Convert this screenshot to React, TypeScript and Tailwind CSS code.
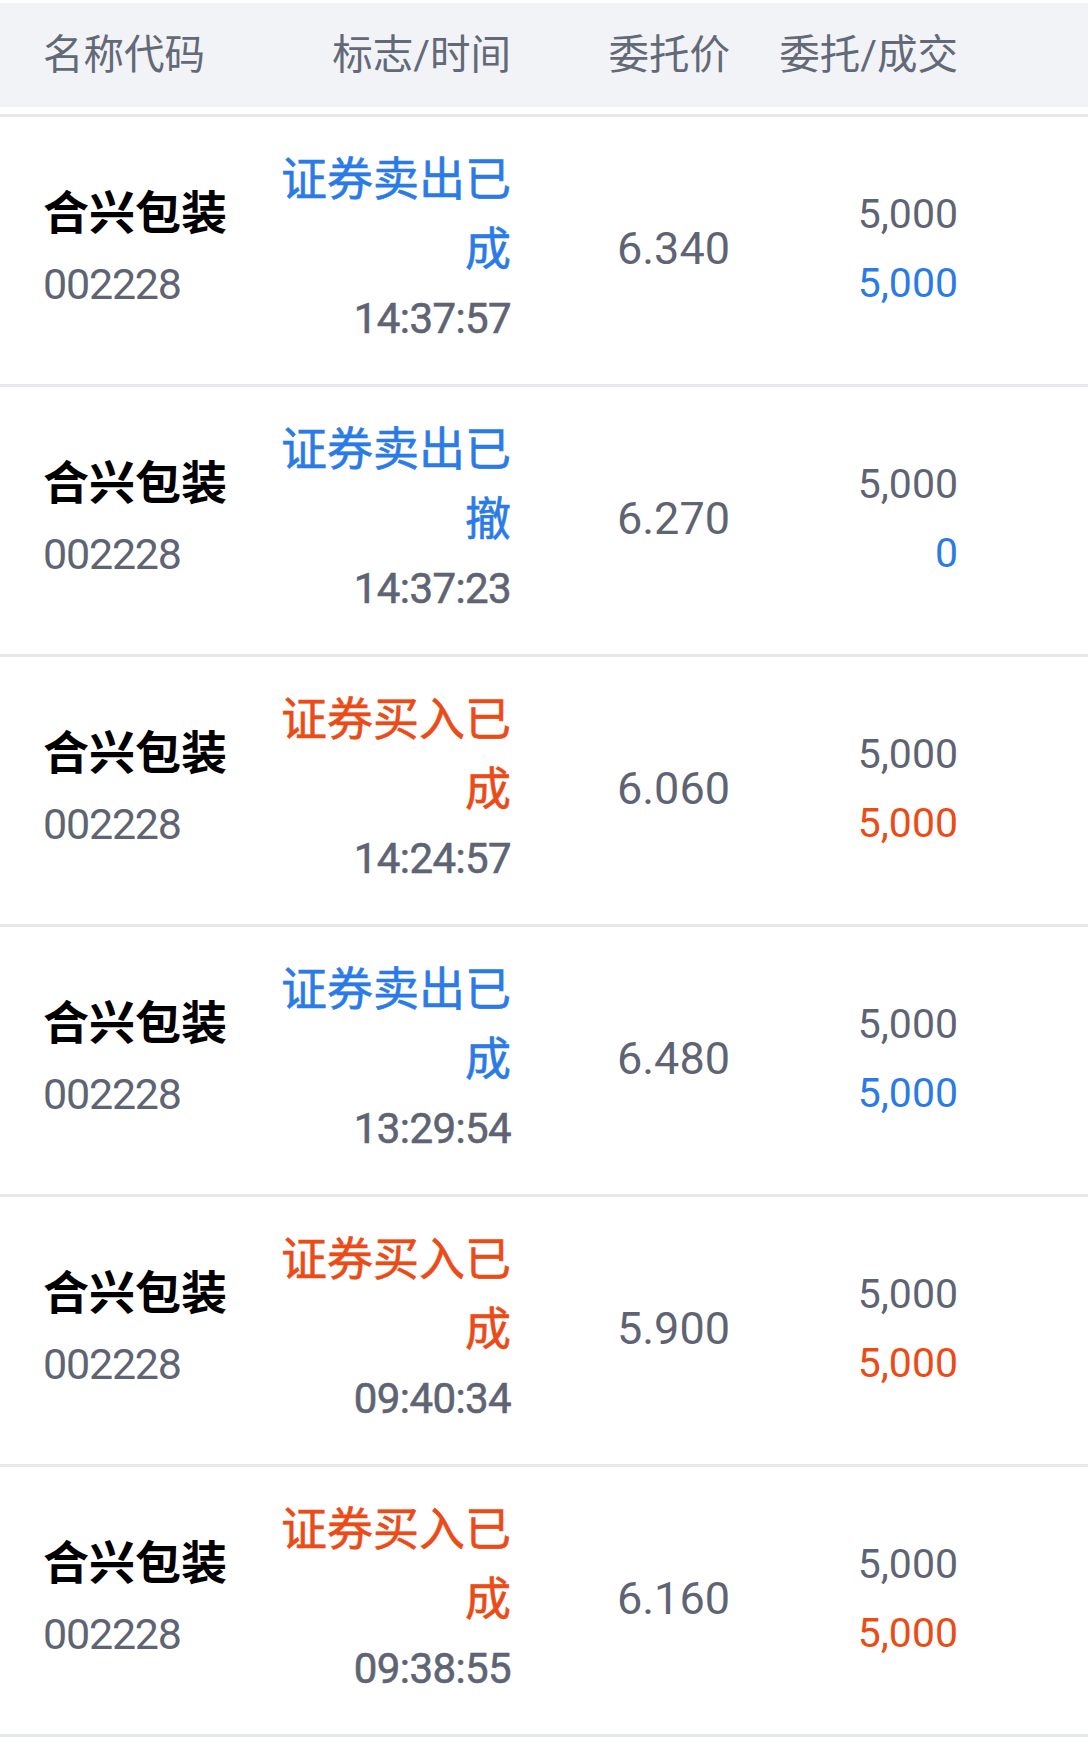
import React from "react";

type Order = {
  side: "buy" | "sell";
  status: string;
  time: string;
  price: string;
  qty: string;
  filled: string;
};

const orders: Order[] = [
  { side: "sell", status: "证券卖出已成", time: "14:37:57", price: "6.340", qty: "5,000", filled: "5,000" },
  { side: "sell", status: "证券卖出已撤", time: "14:37:23", price: "6.270", qty: "5,000", filled: "0" },
  { side: "buy", status: "证券买入已成", time: "14:24:57", price: "6.060", qty: "5,000", filled: "5,000" },
  { side: "sell", status: "证券卖出已成", time: "13:29:54", price: "6.480", qty: "5,000", filled: "5,000" },
  { side: "buy", status: "证券买入已成", time: "09:40:34", price: "5.900", qty: "5,000", filled: "5,000" },
  { side: "buy", status: "证券买入已成", time: "09:38:55", price: "6.160", qty: "5,000", filled: "5,000" },
];

const font = "font-['Roboto','Noto_Sans_CJK_SC',sans-serif]";

const OrderRow = ({ order }: { order: Order }) => {
  const tone = order.side === "sell" ? "text-[#2b7be6]" : "text-[#ea4b17]";

  return (
    <div className="border-t-[3px] border-[#e7e8eb]">
      <div className="flex h-[267px] items-center pb-[3px] pl-[43px]">
        <div className="w-[193px]">
          <div className="text-[46px] leading-[71px] font-bold text-black">合兴包装</div>
          <div className="text-[43px] leading-[71px] tracking-[-1.2px] text-[#5e6473]">002228</div>
        </div>

        <div className="flex w-[275px] flex-col items-end">
          <div
            className={`w-[240px] text-right text-[46px] leading-[70px] [-webkit-text-stroke:0.6px_currentColor] ${tone}`}
          >
            {order.status}
          </div>
          <div className="text-[42px] leading-[70px] tracking-[-0.6px] text-[#5e6473] [-webkit-text-stroke:0.6px_currentColor]">
            {order.time}
          </div>
        </div>

        <div className="w-[219px] text-right text-[45px] leading-[70px] text-[#5e6473]">{order.price}</div>

        <div className="w-[228px] text-right text-[41px] leading-[69px]">
          <div className="text-[#5e6473]">{order.qty}</div>
          <div className={tone}>{order.filled}</div>
        </div>
      </div>
    </div>
  );
};

export default function App() {
  return (
    <div className={`min-h-[1737px] w-full bg-white pt-[3px] ${font}`}>
      <div className="flex h-[104px] items-center bg-[#f1f3f7] pl-[43px] text-[40.5px] text-[#636977]">
        <div className="w-[193px]">名称代码</div>
        <div className="w-[275px] text-right">标志/时间</div>
        <div className="w-[219px] text-right">委托价</div>
        <div className="w-[228px] text-right">委托/成交</div>
      </div>
      <div className="h-[7px]" />

      {orders.map((order, i) => (
        <OrderRow key={i} order={order} />
      ))}
      <div className="border-t-[3px] border-[#e7e8eb]" />
    </div>
  );
}
